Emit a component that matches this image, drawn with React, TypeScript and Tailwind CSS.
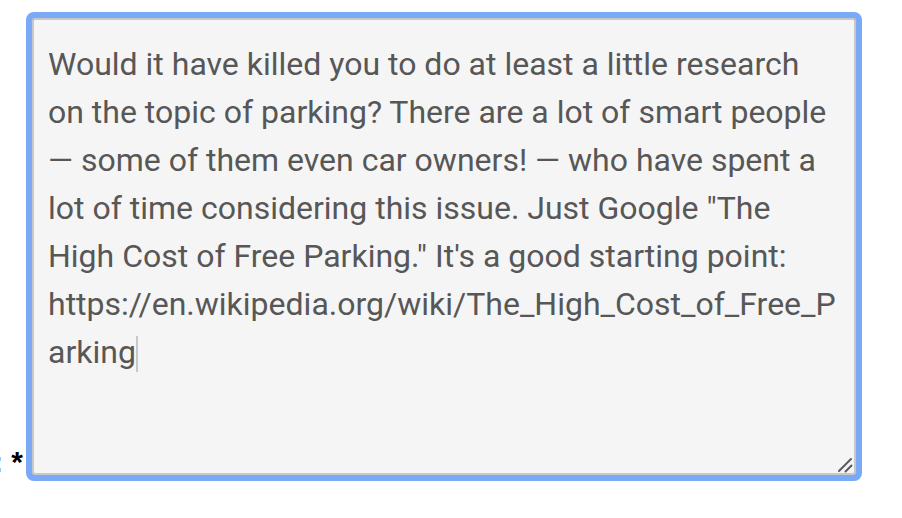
import React from "react";

const TEXT =
  "Would it have killed you to do at least a little research on the topic of parking? There are a lot of smart people \u2014 some of them even car owners! \u2014 who have spent a lot of time considering this issue. Just Google \"The High Cost of Free Parking.\" It's a good starting point: https://en.wikipedia.org/wiki/The_High_Cost_of_Free_Parking";

export default function App() {
  return (
    <div className="w-[902px] h-[518px] bg-white overflow-hidden">
      <div className="flex items-end pt-[12px]">
        <div className="w-[26px] shrink-0 flex justify-end overflow-hidden mb-[4px]">
          <span className="whitespace-nowrap pr-[3px] text-[30px] leading-none text-black font-bold [font-family:'Liberation_Sans',Arial,sans-serif]">
            t: *
          </span>
        </div>
        <div className="p-[6px] rounded-[8px] bg-[#7aa9f5]">
          <div className="relative w-[824px] h-[457px] border-2 border-[#c8c8c8] rounded-[3px] bg-[#f5f5f5] px-[14px] py-[20px]">
            <p className="whitespace-pre-wrap break-words text-[32px] leading-[48px] text-[#575757] [font-family:Roboto,'Noto_Sans',sans-serif]">
              {TEXT}
              <span className="inline-block w-[2px] h-[36px] bg-[#c8c8c8] align-[-9px]" />
            </p>
            <svg
              className="absolute right-[2px] bottom-[1px] overflow-visible"
              width="20"
              height="20"
              viewBox="0 0 20 20"
            >
              <line x1="7" y1="19" x2="19" y2="7" stroke="#5a5a5a" strokeWidth="2" strokeLinecap="round" />
              <line x1="13.5" y1="19.5" x2="19.5" y2="13.5" stroke="#5a5a5a" strokeWidth="2" strokeLinecap="round" />
            </svg>
          </div>
        </div>
      </div>
    </div>
  );
}
